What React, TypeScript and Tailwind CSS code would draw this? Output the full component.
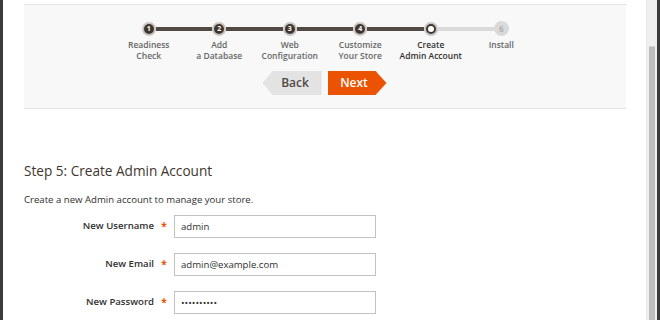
const steps = [
  ['Readiness', 'Check'],
  ['Add', 'a Database'],
  ['Web', 'Configuration'],
  ['Customize', 'Your Store'],
  ['Create', 'Admin Account'],
  ['Install', ''],
];

const current = 4;

const fields = [
  { label: 'New Username', value: 'admin' },
  { label: 'New Email', value: 'admin@example.com' },
  { label: 'New Password', value: '••••••••••' },
];

function StepDot({ index }: { index: number }) {
  if (index < current) {
    return (
      <div className="w-[14px] h-[14px] rounded-full bg-[#c9c6c3] flex items-center justify-center shrink-0">
        <div className="w-[10px] h-[10px] rounded-full bg-[#41362f] text-white text-[7px] font-bold leading-none flex items-center justify-center">
          {index + 1}
        </div>
      </div>
    );
  }
  if (index === current) {
    return (
      <div className="w-[14px] h-[14px] rounded-full bg-[#c9c6c3] flex items-center justify-center shrink-0">
        <div className="w-[10px] h-[10px] rounded-full bg-white border-[2px] border-[#41362f]"></div>
      </div>
    );
  }
  return (
    <div className="w-[15px] h-[15px] rounded-full bg-[#d9d9d9] text-[#a8a8a8] text-[8px] font-semibold leading-none flex items-center justify-center shrink-0">
      {index + 1}
    </div>
  );
}

export default function App() {
  return (
    <div className="w-[660px] h-[320px] overflow-hidden flex bg-white font-['Open_Sans',sans-serif]">
      <div className="w-[3px] bg-[#3b3b3b]"></div>
      <div className="flex-1 pl-[21px] pr-[20px]">
        <div className="mt-[4px] h-[105px] bg-[#f8f8f8] border-t border-b border-[#e3e3e3] flex flex-col items-center">
          <div className="grid grid-cols-6 w-[423px] mt-[16px]">
            {steps.map((s, i) => (
              <div key={i} className="flex flex-col items-center">
                <div className="flex items-center w-full h-[15px]">
                  <div
                    className={
                      'flex-1 h-[4px] ' +
                      (i === 0 ? 'bg-transparent' : i <= current ? 'bg-[#514943]' : 'bg-[#d9d9d9]')
                    }
                  ></div>
                  <StepDot index={i} />
                  <div
                    className={
                      'flex-1 h-[4px] ' +
                      (i === steps.length - 1 ? 'bg-transparent' : i < current ? 'bg-[#514943]' : 'bg-[#d9d9d9]')
                    }
                  ></div>
                </div>
                <div
                  className={
                    'mt-[3px] text-[8.5px] leading-[11px] text-center font-semibold whitespace-nowrap ' +
                    (i === current ? 'text-[#303030] font-bold' : 'text-[#666666]')
                  }
                >
                  <div>{s[0]}</div>
                  <div>{s[1]}</div>
                </div>
              </div>
            ))}
          </div>
          <div className="flex gap-[6px] mt-[10px] ml-[-1px]">
            <button className="h-[24px] w-[59px] pl-[6px] bg-[#e3e3e3] text-[#514943] text-[12px] font-semibold [clip-path:polygon(10px_0,100%_0,100%_100%,10px_100%,0_50%)]">
              Back
            </button>
            <button className="h-[24px] w-[59px] pr-[6px] bg-[#eb5202] text-white text-[12px] font-semibold [clip-path:polygon(0_0,calc(100%-11px)_0,100%_50%,calc(100%-11px)_100%,0_100%)]">
              Next
            </button>
          </div>
        </div>

        <h1 className="mt-[52px] text-[13.6px] leading-[20px] text-[#41362f]">Step 5: Create Admin Account</h1>
        <p className="mt-[13px] text-[9.6px] leading-[12px] text-[#303030]">
          Create a new Admin account to manage your store.
        </p>

        <div className="mt-[9px] flex flex-col gap-[15px]">
          {fields.map((f) => (
            <div key={f.label} className="flex items-center">
              <div className="w-[130px] text-right text-[9.6px] font-semibold text-[#303030]">{f.label}</div>
              <div className="w-[20px] text-center text-[10px] font-bold text-[#eb5202]">*</div>
              <input
                readOnly
                value={f.value}
                className="w-[202px] h-[23px] border border-[#c2c2c2] bg-white px-[6px] text-[9.6px] text-[#303030] outline-none"
              />
            </div>
          ))}
        </div>
      </div>
      <div className="w-[11px] bg-[#efefef] pt-[46px] px-[2px] border-l border-[#e6e6e6]">
        <div className="h-full bg-[#bdbdbd] border-t border-[#d0d0d0]"></div>
      </div>
      <div className="w-[3px] bg-[#3b3b3b]"></div>
    </div>
  );
}
